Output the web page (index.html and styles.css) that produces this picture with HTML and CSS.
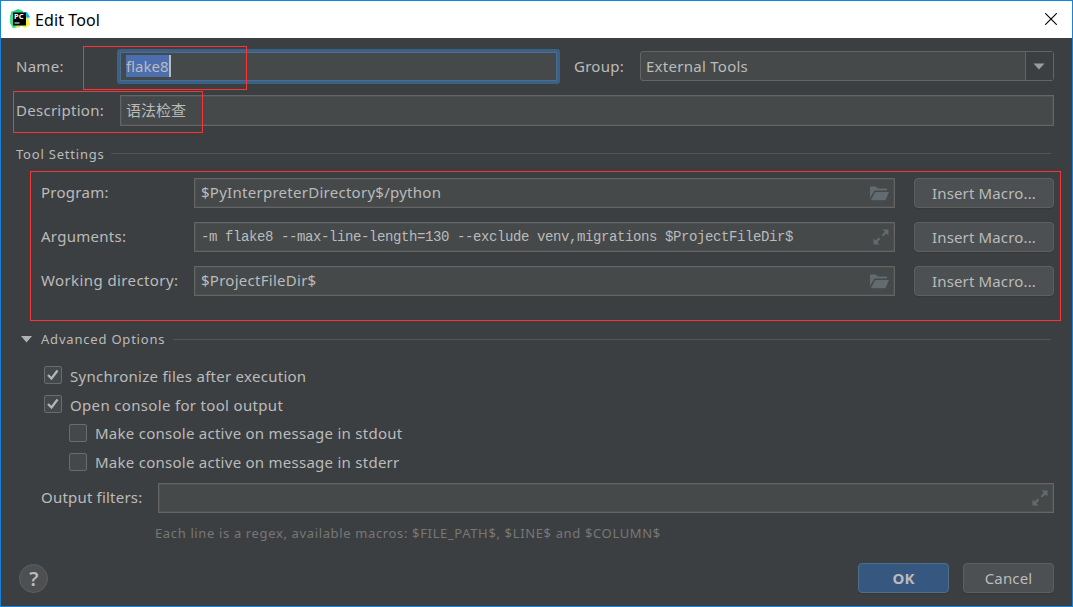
FILE: index.html
```html
<!DOCTYPE html>
<html lang="en">
<head>
    <meta charset="UTF-8">
    <title>Edit Tool</title>
    <link rel="stylesheet" href="styles.css">
</head>
<body>
    <div class="window">
        <header class="titlebar">
            <svg class="logo" width="20" height="20" viewBox="0 0 20 20">
                <path d="M1 3 L8 0 L13 2 L10 18 L3 19 L0 13 Z" fill="#21d789"/>
                <path d="M0 6 L5 5 L7 18 L3 19 L0 14 Z" fill="#41e08a"/>
                <path d="M12 4 L17 3 L20 8 L17 10 L18 13 L12 12 Z" fill="#15b8f0"/>
                <path d="M16 8 L18 9 L20 16 L15 19 L11 17 L5 19 L8 15 L14 15 Z" fill="#f5ee45"/>
                <rect x="3" y="3.5" width="13" height="13" fill="#000"/>
                <text class="logo-text" x="4" y="10.3">PC</text>
                <rect x="4.5" y="13.5" width="5" height="1" fill="#fff"/>
            </svg>
            <span class="title">Edit Tool</span>
            <svg class="close" width="12" height="12" viewBox="0 0 12 12">
                <path d="M0.2 0.2 L11.8 11.8 M11.8 0.2 L0.2 11.8" stroke="#000" stroke-width="1.1"/>
            </svg>
        </header>
        <main>
            <div class="row name-row">
                <label class="label-top">Name:</label>
                <div class="field focused"><span class="selected">flake8</span></div>
                <label class="label-group">Group:</label>
                <div class="combo">
                    <span class="combo-value">External Tools</span>
                    <span class="combo-arrow"><svg width="12" height="7" viewBox="0 0 12 7"><path d="M0.5 0.5 H11.5 L6 6.5 Z" fill="#9a9da0"/></svg></span>
                </div>
            </div>
            <div class="row desc-row">
                <label class="label-top">Description:</label>
                <div class="field chinese">语法检查</div>
            </div>
            <div class="section tool-settings"><span>Tool Settings</span><hr></div>
            <div class="settings">
                <label>Program:</label>
                <div class="field"><span>$PyInterpreterDirectory$/python</span>
                    <svg class="icon" width="19" height="15" viewBox="0 0 19 15"><path d="M0 0.5 H6 L8 2.5 H17 V4.5 H4.5 L0 12 Z M5.2 6 H19 L15.5 14.3 H0.8 Z" fill="#626b70"/></svg>
                </div>
                <button>Insert Macro...</button>
                <label>Arguments:</label>
                <div class="field"><span class="mono">-m flake8 --max-line-length=130 --exclude venv,migrations $ProjectFileDir$</span>
                    <svg class="icon" width="16" height="16" viewBox="0 0 16 16"><path d="M9.5 0.5 H15.5 V6.5 L13.4 4.4 L10 7.6 L8.6 6.2 L11.8 2.7 Z M0.5 9.5 L2.6 11.6 L5.8 8.6 L7.2 10 L4.3 13.3 L6.5 15.5 H0.5 Z" fill="#626b70"/></svg>
                </div>
                <button>Insert Macro...</button>
                <label class="wide-label">Working directory:</label>
                <div class="field"><span>$ProjectFileDir$</span>
                    <svg class="icon" width="19" height="15" viewBox="0 0 19 15"><path d="M0 0.5 H6 L8 2.5 H17 V4.5 H4.5 L0 12 Z M5.2 6 H19 L15.5 14.3 H0.8 Z" fill="#626b70"/></svg>
                </div>
                <button>Insert Macro...</button>
            </div>
            <div class="section advanced">
                <svg width="11" height="7" viewBox="0 0 11 7"><path d="M0 0 H11 L5.5 6.5 Z" fill="#b0b1b2"/></svg>
                <span>Advanced Options</span><hr>
            </div>
            <div class="checks">
                <div class="check"><span class="box"><svg width="14" height="14" viewBox="0 0 14 14"><path d="M2 7 L5.5 10.5 L11.5 2.5" fill="none" stroke="#b4b6b7" stroke-width="2.2"/></svg></span><span>Synchronize files after execution</span></div>
                <div class="check open-console"><span class="box"><svg width="14" height="14" viewBox="0 0 14 14"><path d="M2 7 L5.5 10.5 L11.5 2.5" fill="none" stroke="#b4b6b7" stroke-width="2.2"/></svg></span><span>Open console for tool output</span></div>
                <div class="check sub"><span class="box"></span><span>Make console active on message in stdout</span></div>
                <div class="check sub"><span class="box"></span><span>Make console active on message in stderr</span></div>
            </div>
            <div class="row filters">
                <label>Output filters:</label>
                <div class="field">
                    <svg class="icon" width="16" height="16" viewBox="0 0 16 16"><path d="M9.5 0.5 H15.5 V6.5 L13.4 4.4 L10 7.6 L8.6 6.2 L11.8 2.7 Z M0.5 9.5 L2.6 11.6 L5.8 8.6 L7.2 10 L4.3 13.3 L6.5 15.5 H0.5 Z" fill="#626b70"/></svg>
                </div>
            </div>
            <p class="hint">Each line is a regex, available macros: $FILE_PATH$, $LINE$ and $COLUMN$</p>
            <footer>
                <span class="help">?</span>
                <button class="ok">OK</button>
                <button class="cancel">Cancel</button>
            </footer>
        </main>
        <div class="mark mark-name"></div>
        <div class="mark mark-desc"></div>
        <div class="mark mark-settings"></div>
    </div>
</body>
</html>
```

FILE: styles.css
```css
body, html {
    margin: 0;
    padding: 0;
}
body {
    font-family: "Noto Sans", "Noto Sans CJK SC", sans-serif;
    font-size: 15px;
    line-height: 20px;
    letter-spacing: 0.27px;
    color: #bbbbbb;
}
.window {
    position: relative;
    box-sizing: border-box;
    width: 1073px;
    height: 607px;
    border: 1px solid #1883d7;
    background-color: #3c3f41;
    overflow: hidden;
}
.titlebar {
    display: flex;
    align-items: center;
    height: 37px;
    padding: 0 15px 0 9px;
    background-color: #ffffff;
    color: #000000;
}
.logo {
    margin-bottom: 1px;
}
.title {
    flex: 1;
    margin-left: 5px;
    font-size: 16px;
    letter-spacing: 0.1px;
}
.close {
    margin-bottom: 1px;
}
.logo-text {
    font-size: 7.5px;
    font-weight: bold;
    letter-spacing: 0;
    fill: #ffffff;
}
main {
    padding: 13px 18px 0 15px;
}
.row {
    display: flex;
    align-items: center;
    height: 30px;
}
.field {
    display: flex;
    align-items: center;
    box-sizing: border-box;
    height: 30px;
    padding: 0 5px;
    border: 1px solid #646464;
    box-shadow: inset 0 0 0 1px #4e5151;
    background-color: #45494a;
    white-space: nowrap;
}
.label-top {
    width: 104px;
}
.row .field {
    flex: 1;
}
.desc-row .chinese {
    height: 31px;
    letter-spacing: 0;
}
.name-row .focused {
    flex: none;
    width: 443px;
    height: 35px;
    margin-left: -3px;
    padding-left: 6px;
    border: 3px solid #3d6185;
    border-radius: 3px;
    box-shadow: inset 0 0 0 1px #466d94;
}
.selected {
    height: 22px;
    line-height: 22px;
    background-color: #4b6eaf;
    border-right: 2px solid #bbbbbb;
    letter-spacing: 0;
}
.label-group {
    width: 66px;
    margin-left: 14px;
}
.combo {
    display: flex;
    box-sizing: border-box;
    flex: 1;
    height: 30px;
    border: 1px solid #646464;
    border-radius: 3px;
    background-color: #45494a;
}
.combo-value {
    flex: 1;
    padding-left: 5px;
    line-height: 28px;
}
.combo-arrow {
    display: flex;
    align-items: center;
    justify-content: center;
    box-sizing: border-box;
    width: 28px;
    padding-right: 1px;
    border-left: 1px solid #646464;
    background-color: #3c3f41;
}
.desc-row {
    margin-top: 14px;
}
.section {
    display: flex;
    align-items: center;
    height: 20px;
    font-size: 13px;
    letter-spacing: 0.8px;
}
.section hr {
    flex: 1;
    height: 1px;
    margin: 0 3px 0 8px;
    border: none;
    background-color: #515456;
}
.tool-settings {
    margin-top: 19px;
}
.tool-settings hr {
    margin: 0 3px 2px 6px;
}
.settings {
    display: grid;
    grid-template-columns: 153px 720px 140px;
    grid-template-rows: 30px 30px 30px;
    row-gap: 14px;
    align-items: center;
    margin: 14px 0 0 25px;
}
.settings label,
.settings .field span,
.filters label {
    padding-bottom: 2px;
}
.settings .field {
    width: 701px;
    padding-left: 6px;
}
.wide-label {
    letter-spacing: 0.4px;
}
.icon {
    margin-left: auto;
}
.settings .field .mono {
    padding-bottom: 0;
    font-family: "Liberation Mono", monospace;
    font-size: 14px;
    letter-spacing: -0.4px;
}
button {
    box-sizing: border-box;
    height: 30px;
    padding: 0;
    border: 1px solid #5e6060;
    border-radius: 4px;
    background-color: #4c5052;
    box-shadow: 0 1px 1px #36393a;
    color: #bbbbbb;
    font-family: inherit;
    font-size: 15px;
    letter-spacing: 0.15px;
}
.advanced {
    margin: 33px 0 0 5px;
}
.advanced span {
    margin-left: 9px;
}
.checks {
    margin: 17px 0 0 28px;
}
.check {
    display: flex;
    align-items: center;
    height: 20px;
    margin-bottom: 9px;
}
.open-console {
    letter-spacing: 0.33px;
}
.check .box {
    display: flex;
    align-items: center;
    justify-content: center;
    box-sizing: border-box;
    width: 18px;
    height: 18px;
    margin: 0 8px 2px 0;
    border: 1px solid #6b6b6b;
    border-radius: 2px;
    background-color: #43494a;
}
.sub {
    margin: -1px 0 10px 25px;
    letter-spacing: 0.26px;
}
.check.sub .box {
    margin-bottom: 0;
}
.filters {
    margin: 11px 0 0 25px;
}
.filters label {
    width: 117px;
    letter-spacing: 0.2px;
}
.hint {
    margin: 10px 0 0 139px;
    font-size: 13px;
    letter-spacing: 0.64px;
    color: #777777;
}
footer {
    display: flex;
    align-items: center;
    margin: 20px 0 0 3px;
}
.help {
    box-sizing: border-box;
    width: 29px;
    height: 29px;
    margin-right: auto;
    padding-left: 1px;
    border: 1px solid #5e6060;
    border-radius: 50%;
    background-color: #4c5052;
    font-size: 20px;
    font-weight: 600;
    line-height: 27px;
    text-align: center;
}
.ok, .cancel {
    width: 91px;
}
.ok {
    margin-right: 14px;
    border-color: #4c708c;
    background-color: #365880;
    font-weight: bold;
}
/* red frames over the form */
.mark {
    position: absolute;
    box-sizing: border-box;
    border: 1px solid #f83434;
}
.mark-name {
    left: 82px;
    top: 45px;
    width: 164px;
    height: 44px;
}
.mark-desc {
    left: 12px;
    top: 90px;
    width: 190px;
    height: 42px;
}
.mark-settings {
    left: 29px;
    top: 170px;
    width: 1031px;
    height: 150px;
}
```
